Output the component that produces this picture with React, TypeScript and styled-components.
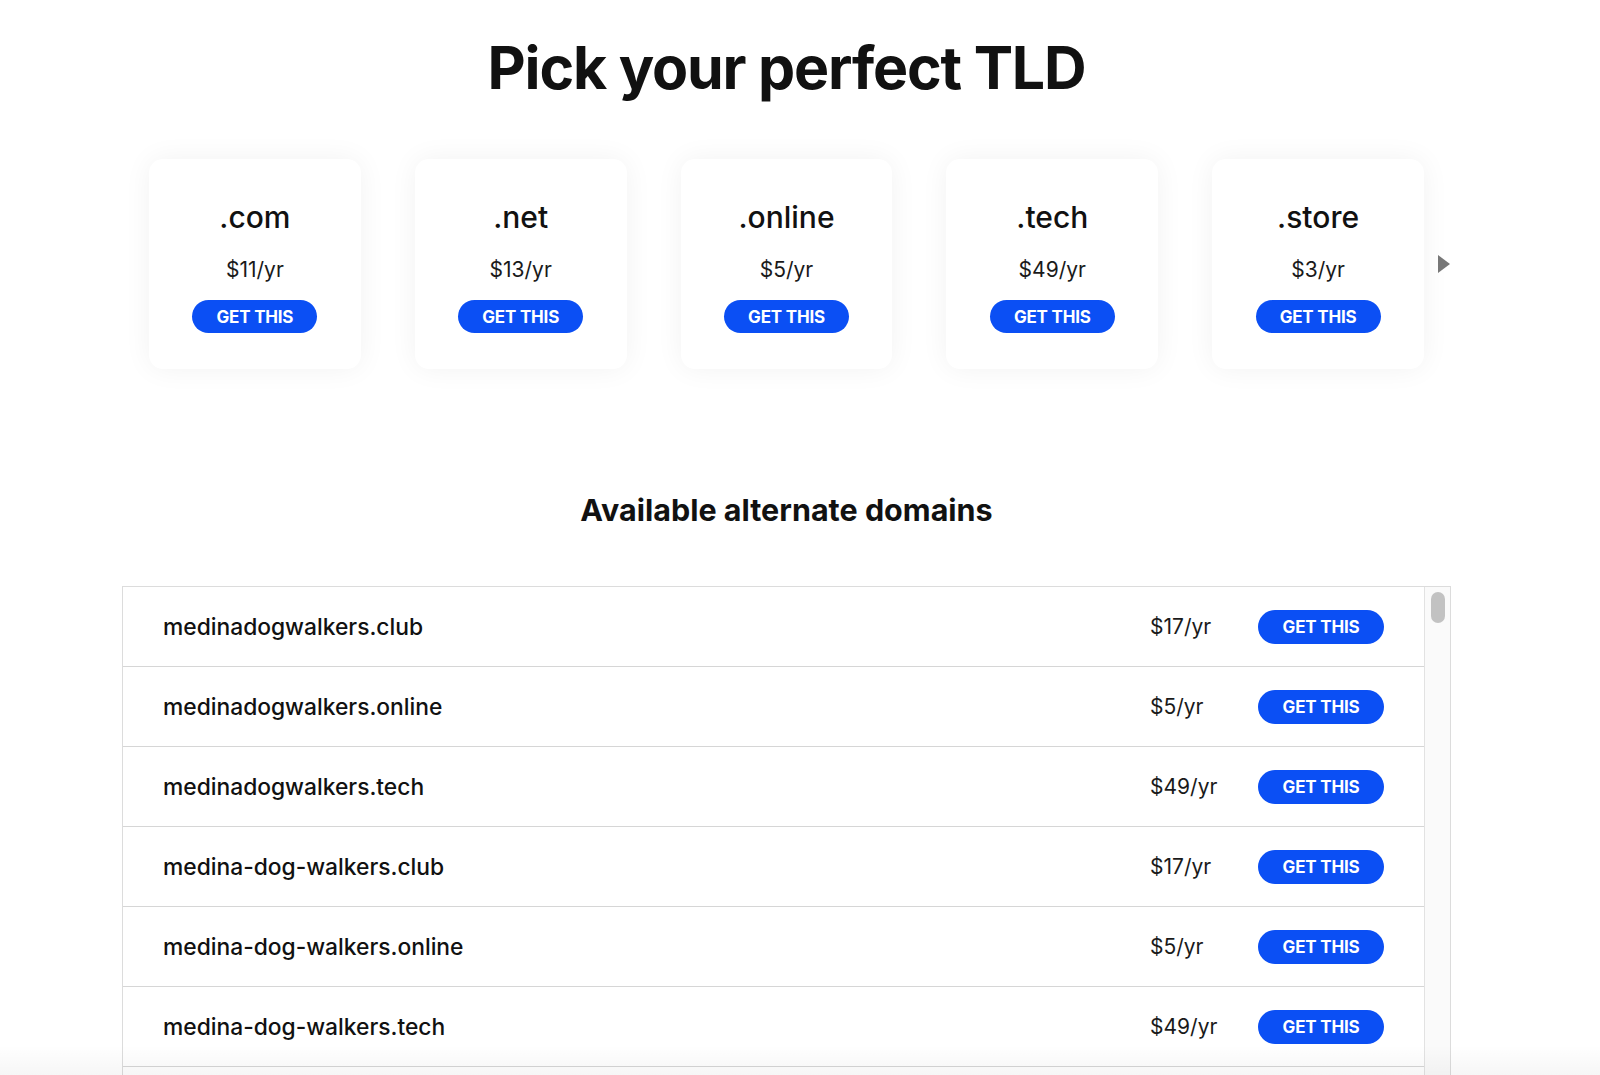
import React from "react";
import styled, { createGlobalStyle } from "styled-components";

const GlobalStyle = createGlobalStyle`
  html, body {
    margin: 0;
    padding: 0;
    background: #ffffff;
    overflow: hidden;
  }
  body {
    font-family: Inter, "Liberation Sans", Arial, sans-serif;
    color: #111111;
  }
`;

const Page = styled.div`
  height: 1075px;
  padding-right: 27px;
  box-sizing: border-box;
  position: relative;
  overflow: hidden;
`;

const Content = styled.div`
  width: 1329px;
  margin: 0 auto;
  display: flex;
  flex-direction: column;
  align-items: stretch;
`;

const Title = styled.h1`
  margin: 31px 0 0;
  font-size: 59px;
  line-height: 74px;
  font-weight: 700;
  letter-spacing: -1.2px;
  text-align: center;
  color: #111111;
`;

const Carousel = styled.div`
  position: relative;
  margin-top: 54px;
  padding: 0 27px;
`;

const CardRow = styled.div`
  display: flex;
  gap: 54px;
`;

const Card = styled.div`
  width: 212px;
  height: 210px;
  box-sizing: border-box;
  background: #ffffff;
  border-radius: 14px;
  box-shadow: 0 0 28px rgba(0, 0, 0, 0.055);
  display: flex;
  flex-direction: column;
  align-items: center;
  padding-top: 40px;
`;

const Tld = styled.div`
  font-size: 30px;
  line-height: 36px;
  font-weight: 500;
  color: #111111;
`;

const CardPrice = styled.div`
  margin-top: 22px;
  font-size: 21px;
  line-height: 26px;
  font-weight: 400;
  color: #1a1a1a;
`;

const GetButton = styled.button<{ $w?: number; $h?: number }>`
  width: ${(p) => p.$w ?? 125}px;
  height: ${(p) => p.$h ?? 33}px;
  border: none;
  border-radius: 20px;
  background: #0b4ff4;
  color: #ffffff;
  font-family: Inter, "Liberation Sans", Arial, sans-serif;
  font-size: 17px;
  font-weight: 700;
  letter-spacing: -0.2px;
  text-transform: uppercase;
  padding: 0;
  cursor: pointer;
`;

const CardButtonWrap = styled.div`
  margin-top: 17px;
`;

const NextArrow = styled.div`
  position: absolute;
  right: 1px;
  top: 96px;
  width: 0;
  height: 0;
  border-top: 9px solid transparent;
  border-bottom: 9px solid transparent;
  border-left: 12px solid #777777;
`;

const Subtitle = styled.h2`
  margin: 123px 0 0;
  font-size: 30.5px;
  line-height: 36px;
  font-weight: 700;
  text-align: center;
  color: #111111;
`;

const ListBox = styled.div`
  margin-top: 58px;
  border: 1px solid #dcdcdc;
  display: flex;
  height: 700px;
`;

const Rows = styled.div`
  flex: 1;
  display: flex;
  flex-direction: column;
`;

const Row = styled.div`
  height: 79px;
  border-bottom: 1px solid #d6d6d6;
  display: flex;
  align-items: center;
  padding: 0 40px 0 40px;
  flex-shrink: 0;
`;

const Domain = styled.div`
  flex: 1;
  font-size: 22.8px;
  font-weight: 500;
  color: #111111;
`;

const RowPrice = styled.div`
  width: 108px;
  font-size: 21px;
  font-weight: 400;
  color: #1a1a1a;
`;

const Track = styled.div`
  width: 26px;
  background: #fafafa;
  border-left: 1px solid #e2e2e2;
  display: flex;
  justify-content: center;
  padding-top: 5px;
  box-sizing: border-box;
`;

const Thumb = styled.div`
  width: 14px;
  height: 31px;
  border-radius: 7px;
  background: #c2c2c2;
`;

const BottomFade = styled.div`
  position: absolute;
  left: 0;
  right: 0;
  bottom: 0;
  height: 30px;
  background: linear-gradient(rgba(0, 0, 0, 0), rgba(0, 0, 0, 0.035));
  pointer-events: none;
`;

const tlds = [
  { name: ".com", price: "$11/yr" },
  { name: ".net", price: "$13/yr" },
  { name: ".online", price: "$5/yr" },
  { name: ".tech", price: "$49/yr" },
  { name: ".store", price: "$3/yr" },
];

const domains = [
  { name: "medinadogwalkers.club", price: "$17/yr" },
  { name: "medinadogwalkers.online", price: "$5/yr" },
  { name: "medinadogwalkers.tech", price: "$49/yr" },
  { name: "medina-dog-walkers.club", price: "$17/yr" },
  { name: "medina-dog-walkers.online", price: "$5/yr" },
  { name: "medina-dog-walkers.tech", price: "$49/yr" },
];

function App() {
  return (
    <Page>
      <GlobalStyle />
      <Content>
        <Title>Pick your perfect TLD</Title>
        <Carousel>
          <CardRow>
            {tlds.map((t) => (
              <Card key={t.name}>
                <Tld>{t.name}</Tld>
                <CardPrice>{t.price}</CardPrice>
                <CardButtonWrap>
                  <GetButton>Get this</GetButton>
                </CardButtonWrap>
              </Card>
            ))}
          </CardRow>
          <NextArrow />
        </Carousel>
        <Subtitle>Available alternate domains</Subtitle>
        <ListBox>
          <Rows>
            {domains.map((d) => (
              <Row key={d.name}>
                <Domain>{d.name}</Domain>
                <RowPrice>{d.price}</RowPrice>
                <GetButton $w={126} $h={34}>
                  Get this
                </GetButton>
              </Row>
            ))}
          </Rows>
          <Track>
            <Thumb />
          </Track>
        </ListBox>
      </Content>
      <BottomFade />
    </Page>
  );
}

export default App;
